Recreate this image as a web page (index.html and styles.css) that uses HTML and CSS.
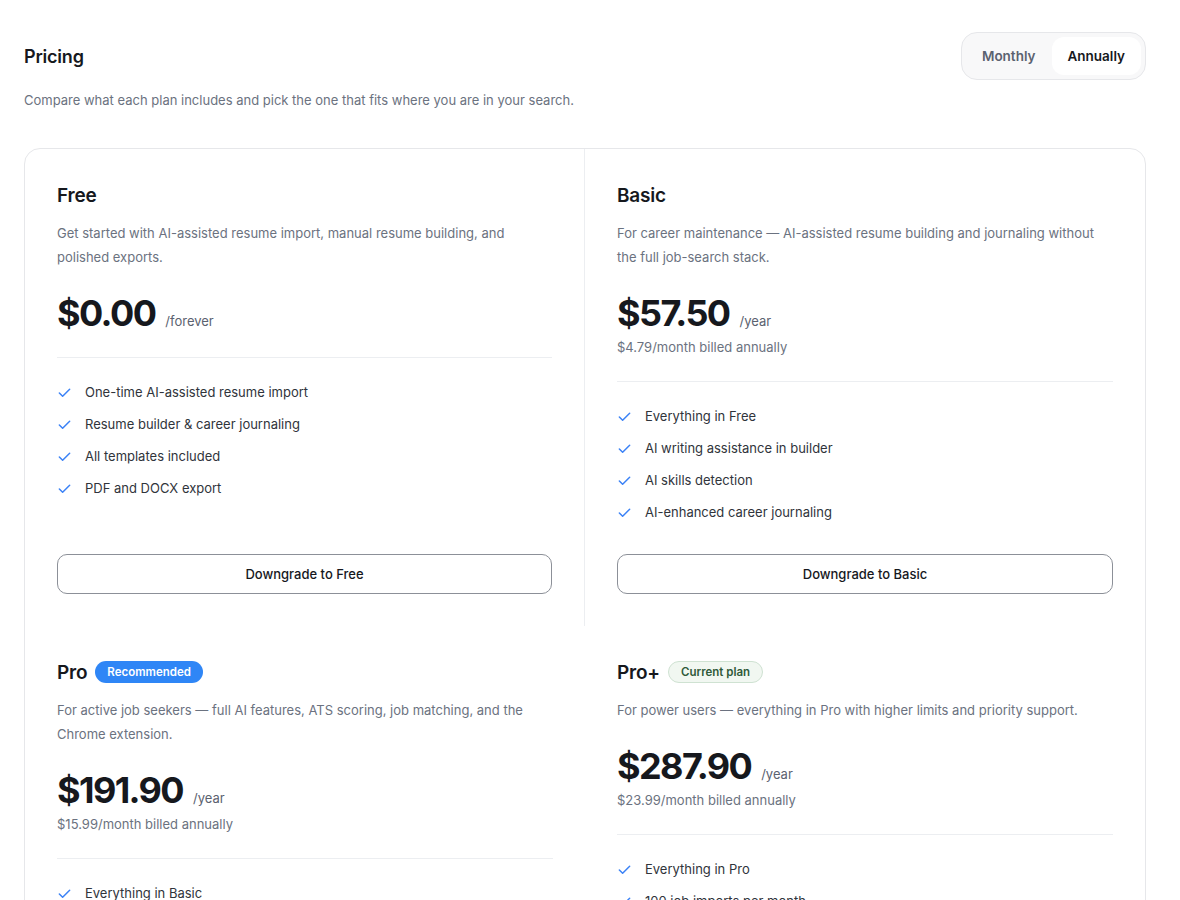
FILE: index.html
```html
<!DOCTYPE html>
<html lang="en">
<head>
<meta charset="utf-8">
<title>Pricing</title>
<link rel="stylesheet" href="styles.css">
</head>
<body>
<main class="page">
  <header class="head">
    <h1 class="title">Pricing</h1>
    <div class="toggle">
      <button class="toggle-btn">Monthly</button>
      <button class="toggle-btn active">Annually</button>
    </div>
  </header>
  <p class="subtitle">Compare what each plan includes and pick the one that fits where you are in your search.</p>

  <section class="plans">
    <article class="plan divided">
      <h2 class="plan-name">Free</h2>
      <p class="plan-desc">Get started with AI-assisted resume import, manual resume building, and polished exports.</p>
      <div class="price-block">
        <div class="price"><span class="amount">$0.00</span><span class="period">/forever</span></div>
      </div>
      <hr class="rule">
      <ul class="features">
        <li><svg class="check" viewBox="0 0 16 16"><path d="M2.5 8.5l3.5 3.5 7.5-7.5"/></svg>One-time AI-assisted resume import</li>
        <li><svg class="check" viewBox="0 0 16 16"><path d="M2.5 8.5l3.5 3.5 7.5-7.5"/></svg>Resume builder &amp; career journaling</li>
        <li><svg class="check" viewBox="0 0 16 16"><path d="M2.5 8.5l3.5 3.5 7.5-7.5"/></svg>All templates included</li>
        <li><svg class="check" viewBox="0 0 16 16"><path d="M2.5 8.5l3.5 3.5 7.5-7.5"/></svg>PDF and DOCX export</li>
      </ul>
      <button class="plan-btn">Downgrade to Free</button>
    </article>

    <article class="plan">
      <h2 class="plan-name">Basic</h2>
      <p class="plan-desc">For career maintenance — AI-assisted resume building and journaling without the full job-search stack.</p>
      <div class="price-block">
        <div class="price"><span class="amount">$57.50</span><span class="period">/year</span></div>
        <p class="billed">$4.79/month billed annually</p>
      </div>
      <hr class="rule">
      <ul class="features">
        <li><svg class="check" viewBox="0 0 16 16"><path d="M2.5 8.5l3.5 3.5 7.5-7.5"/></svg>Everything in Free</li>
        <li><svg class="check" viewBox="0 0 16 16"><path d="M2.5 8.5l3.5 3.5 7.5-7.5"/></svg>AI writing assistance in builder</li>
        <li><svg class="check" viewBox="0 0 16 16"><path d="M2.5 8.5l3.5 3.5 7.5-7.5"/></svg>AI skills detection</li>
        <li><svg class="check" viewBox="0 0 16 16"><path d="M2.5 8.5l3.5 3.5 7.5-7.5"/></svg>AI-enhanced career journaling</li>
      </ul>
      <button class="plan-btn">Downgrade to Basic</button>
    </article>

    <article class="plan">
      <h2 class="plan-name">Pro <span class="badge badge-blue">Recommended</span></h2>
      <p class="plan-desc">For active job seekers — full AI features, ATS scoring, job matching, and the Chrome extension.</p>
      <div class="price-block">
        <div class="price"><span class="amount">$191.90</span><span class="period">/year</span></div>
        <p class="billed">$15.99/month billed annually</p>
      </div>
      <hr class="rule">
      <ul class="features">
        <li><svg class="check" viewBox="0 0 16 16"><path d="M2.5 8.5l3.5 3.5 7.5-7.5"/></svg>Everything in Basic</li>
        <li><svg class="check" viewBox="0 0 16 16"><path d="M2.5 8.5l3.5 3.5 7.5-7.5"/></svg>ATS scoring</li>
        <li><svg class="check" viewBox="0 0 16 16"><path d="M2.5 8.5l3.5 3.5 7.5-7.5"/></svg>Job matching</li>
        <li><svg class="check" viewBox="0 0 16 16"><path d="M2.5 8.5l3.5 3.5 7.5-7.5"/></svg>Chrome extension</li>
      </ul>
      <button class="plan-btn">Downgrade to Pro</button>
    </article>

    <article class="plan">
      <h2 class="plan-name">Pro+ <span class="badge badge-green">Current plan</span></h2>
      <p class="plan-desc">For power users — everything in Pro with higher limits and priority support.</p>
      <div class="price-block">
        <div class="price"><span class="amount">$287.90</span><span class="period">/year</span></div>
        <p class="billed">$23.99/month billed annually</p>
      </div>
      <hr class="rule">
      <ul class="features">
        <li><svg class="check" viewBox="0 0 16 16"><path d="M2.5 8.5l3.5 3.5 7.5-7.5"/></svg>Everything in Pro</li>
        <li><svg class="check" viewBox="0 0 16 16"><path d="M2.5 8.5l3.5 3.5 7.5-7.5"/></svg>100 job imports per month</li>
        <li><svg class="check" viewBox="0 0 16 16"><path d="M2.5 8.5l3.5 3.5 7.5-7.5"/></svg>Higher AI usage limits</li>
        <li><svg class="check" viewBox="0 0 16 16"><path d="M2.5 8.5l3.5 3.5 7.5-7.5"/></svg>Priority support</li>
      </ul>
      <button class="plan-btn">Current plan</button>
    </article>
  </section>
</main>
</body>
</html>
```

FILE: styles.css
```css
* { box-sizing: border-box; }

html, body {
  margin: 0;
  padding: 0;
  background: #ffffff;
}

body {
  font-family: Inter, "Noto Sans", "Liberation Sans", sans-serif;
  color: #16181d;
  -webkit-font-smoothing: antialiased;
}

.page {
  padding: 32px 34px 40px 24px;
}

.head {
  display: flex;
  align-items: center;
  justify-content: space-between;
}

.title {
  margin: 0;
  font-size: 18px;
  font-weight: 600;
  letter-spacing: -0.2px;
  color: #16181d;
}

.toggle {
  display: flex;
  padding: 4px;
  height: 48px;
  background: #f8f8f9;
  border: 1px solid #e6e7ea;
  border-radius: 16px;
}

.toggle-btn {
  font-family: inherit;
  font-size: 13.5px;
  font-weight: 600;
  color: #5b6270;
  background: transparent;
  border: 0;
  border-radius: 12px;
  padding: 0 16px;
  cursor: pointer;
}

.toggle-btn.active {
  background: #ffffff;
  color: #16181d;
}

.subtitle {
  margin: 10px 0 0;
  font-size: 13px;
  line-height: 20px;
  color: #6b7280;
}

.plans {
  margin-top: 38px;
  display: grid;
  grid-template-columns: 1fr 1fr;
  border: 1px solid #e6e7ea;
  border-radius: 16px;
}

.plan {
  display: flex;
  flex-direction: column;
  padding: 32px;
}

.plan.divided {
  border-right: 1px solid #eceef1;
}

.plan-name {
  display: flex;
  align-items: center;
  gap: 8px;
  margin: 0;
  height: 28px;
  font-size: 19px;
  font-weight: 600;
  letter-spacing: -0.2px;
  color: #16181d;
}

.badge {
  display: inline-flex;
  align-items: center;
  height: 22px;
  padding: 0 12px;
  border-radius: 999px;
  font-size: 11.5px;
  font-weight: 600;
  letter-spacing: 0;
}

.badge-blue {
  background: #2f86f6;
  color: #ffffff;
}

.badge-green {
  background: #f1f7f1;
  border: 1px solid #cfe2d2;
  color: #2f5a3a;
}

.plan-desc {
  margin: 12px 0 0;
  font-size: 13px;
  line-height: 24px;
  color: #6b7280;
}

.price-block {
  margin-top: 20px;
}

.price {
  display: flex;
  align-items: baseline;
  gap: 10px;
}

.amount {
  font-size: 36px;
  line-height: 48px;
  font-weight: 700;
  letter-spacing: -1.6px;
  color: #16181d;
}

.period {
  font-size: 13px;
  color: #5b6270;
}

.billed {
  margin: 0 0 4px;
  font-size: 13px;
  line-height: 20px;
  color: #6b7280;
}

.rule {
  margin: 20px 0 0;
  border: 0;
  border-top: 1px solid #eceef1;
}

.features {
  list-style: none;
  margin: 24px 0 32px;
  padding: 0;
  display: flex;
  flex-direction: column;
  gap: 12px;
}

.features li {
  display: flex;
  align-items: center;
  gap: 13px;
  font-size: 13px;
  line-height: 20px;
  color: #30343b;
}

.check {
  width: 15px;
  height: 15px;
  flex: none;
  fill: none;
  stroke: #3b82f6;
  stroke-width: 1.6;
  stroke-linecap: round;
  stroke-linejoin: round;
}

.plan-btn {
  margin-top: auto;
  height: 40px;
  width: 100%;
  font-family: inherit;
  font-size: 13px;
  font-weight: 500;
  color: #16181d;
  background: #ffffff;
  border: 1px solid #8c9098;
  border-radius: 10px;
  cursor: pointer;
}
```
